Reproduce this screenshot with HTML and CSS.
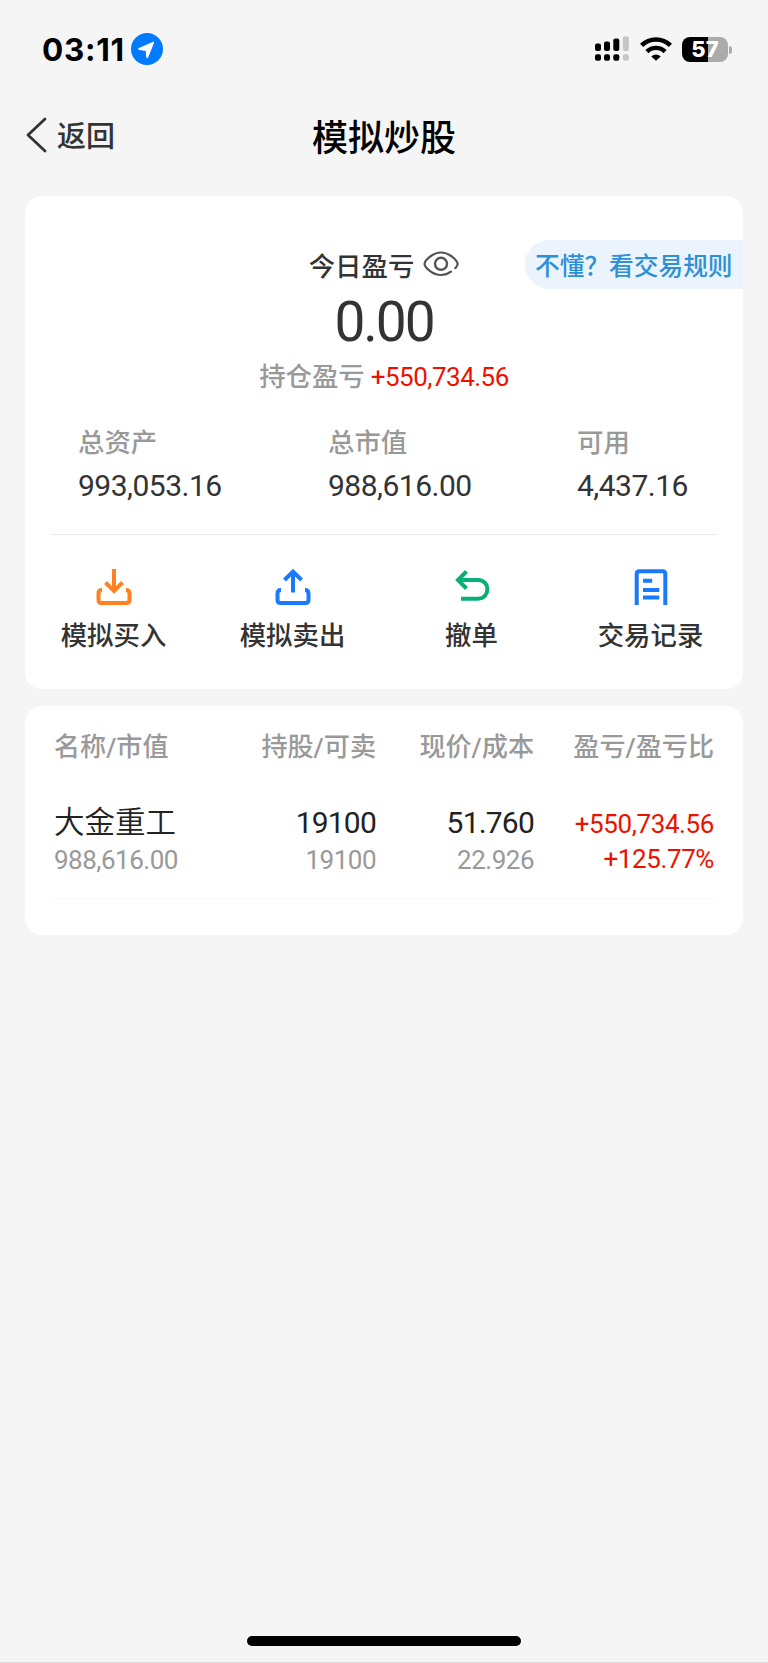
FILE: index.html
```
<!DOCTYPE html>
<html lang="zh-CN">

<head>
    <meta charset="UTF-8" />
    <meta name="viewport" content="width=device-width, initial-scale=1.0" />
    <title>模拟炒股</title>
    <link rel="stylesheet" href="styles.css">
</head>

<body>
    <div class="status-bar">
        <span class="time">03:11</span>
        <svg class="location" width="32" height="32" viewBox="0 0 32 32">
            <circle cx="16" cy="16" r="16" fill="#007aff" />
            <path d="M22 9.8 L8.3 16 L15.6 16.9 L16.2 24 Z" fill="#fff" stroke="#fff" stroke-width="2" stroke-linejoin="round" />
        </svg>
        <svg class="signal" width="34" height="26" viewBox="0 0 34 26">
            <rect x="0" y="7.5" width="6" height="7.5" rx="2" />
            <rect x="9" y="5.5" width="6" height="9.5" rx="2" />
            <rect x="18.3" y="2.5" width="6" height="12.5" rx="2" />
            <rect x="0" y="18.3" width="6" height="6.5" rx="2" />
            <rect x="9" y="18.3" width="6" height="6.5" rx="2" />
            <rect x="18.3" y="18.3" width="6" height="6.5" rx="2" />
            <rect x="27.8" y="0.3" width="6" height="14.7" rx="2" fill="#c6c6c6" />
            <rect x="27.8" y="18.3" width="6" height="6.5" rx="2" fill="#c6c6c6" />
        </svg>
        <svg class="wifi" width="32" height="24" viewBox="0 0 32 24">
            <path d="M1.6 8.4 A20.5 20.5 0 0 1 30.4 8.4" fill="none" stroke="#000" stroke-width="4.6" />
            <path d="M6.9 14.6 A12.9 12.9 0 0 1 25.1 14.6" fill="none" stroke="#000" stroke-width="4.4" />
            <path d="M16 23.8 L11.3 19.4 A7 7 0 0 1 20.7 19.4 Z" />
        </svg>
        <div class="battery">57</div>
    </div>

    <header class="nav-bar">
        <a class="back">
            <svg width="22" height="36" viewBox="0 0 22 36">
                <path d="M20 2 L3 18 L20 34" fill="none" stroke="#333" stroke-width="2.8" stroke-linecap="round" stroke-linejoin="round" />
            </svg>
            <span>返回</span>
        </a>
        <h1>模拟炒股</h1>
    </header>

    <section class="card summary">
        <a class="rules">不懂？看交易规则</a>
        <div class="today-label">
            <span>今日盈亏</span>
            <svg width="36" height="26" viewBox="0 0 36 26">
                <path d="M32.3 17.2 C34 15.3 34.6 14 34.6 13 C34.6 10 27 1.5 18 1.5 C9 1.5 1.6 10 1.6 13 C1.6 16 9 24 18 24 C22 24 25.5 22.5 28 20.7" fill="none" stroke="#555" stroke-width="2.2" stroke-linecap="round" />
                <circle cx="18" cy="12.8" r="6" fill="none" stroke="#555" stroke-width="2.4" />
            </svg>
        </div>
        <div class="today-value">0.00</div>
        <div class="position">
            <span class="position-label">持仓盈亏</span>
            <span class="position-value">+550,734.56</span>
        </div>

        <div class="assets">
            <div class="asset">
                <div class="asset-label">总资产</div>
                <div class="asset-value">993,053.16</div>
            </div>
            <div class="asset">
                <div class="asset-label">总市值</div>
                <div class="asset-value">988,616.00</div>
            </div>
            <div class="asset">
                <div class="asset-label">可用</div>
                <div class="asset-value">4,437.16</div>
            </div>
        </div>

        <div class="actions">
            <a class="action">
                <svg width="36" height="38" viewBox="0 0 36 38" fill="none" stroke="#ff8120" stroke-width="4">
                    <path d="M18 1 V24 M9.5 14.5 L18 23 L26.5 14.5" />
                    <path d="M6 22 Q2.5 22 2.5 25.5 V32 Q2.5 35 5.5 35 H30.5 Q33.5 35 33.5 32 V25.5 Q33.5 22 30 22" />
                </svg>
                <span>模拟买入</span>
            </a>
            <a class="action">
                <svg width="36" height="38" viewBox="0 0 36 38" fill="none" stroke="#1a7aff" stroke-width="4">
                    <path d="M18 24.5 V4 M9.5 12 L18 3.5 L26.5 12" />
                    <path d="M6 22 Q2.5 22 2.5 25.5 V32 Q2.5 35 5.5 35 H30.5 Q33.5 35 33.5 32 V25.5 Q33.5 22 30 22" />
                </svg>
                <span>模拟卖出</span>
            </a>
            <a class="action">
                <svg width="36" height="38" viewBox="0 0 36 38" fill="none" stroke="#06b077" stroke-width="4">
                    <path d="M12.5 3.5 L4 12 L12.5 20.5" />
                    <path d="M4 12 H24 C36.5 12 36.5 30.7 24 30.7 H7" />
                </svg>
                <span>撤单</span>
            </a>
            <a class="action">
                <svg width="36" height="38" viewBox="0 0 36 38" fill="none" stroke="#1a7aff" stroke-width="4">
                    <path d="M3.7 37 V6 Q3.7 3.3 6.4 3.3 H29.6 Q32.3 3.3 32.3 6 V37" />
                    <path d="M10 12.8 H19.2 M10 22 H26.3 M10 29.5 H26.3" />
                </svg>
                <span>交易记录</span>
            </a>
        </div>
    </section>

    <section class="card holdings">
        <div class="row head">
            <div>名称/市值</div>
            <div>持股/可卖</div>
            <div>现价/成本</div>
            <div>盈亏/盈亏比</div>
        </div>
        <div class="row stock">
            <div>
                <div class="name">大金重工</div>
                <div class="sub">988,616.00</div>
            </div>
            <div>
                <div class="num">19100</div>
                <div class="sub">19100</div>
            </div>
            <div>
                <div class="num">51.760</div>
                <div class="sub">22.926</div>
            </div>
            <div class="profit">
                <div>+550,734.56</div>
                <div>+125.77%</div>
            </div>
        </div>
    </section>

    <div class="home-indicator"></div>
</body>

</html>
```

FILE: styles.css
```
:root {
    --bg: #f5f5f5;
    --text: #333;
    --muted: #999;
    --red: #ee1100;
    --line: #ececec;
}

* {
    box-sizing: border-box;
}

body {
    margin: 0;
    min-height: 1663px;
    display: flex;
    flex-direction: column;
    background: var(--bg);
    border-bottom: 1px solid #ddd;
    color: var(--text);
    font-family: Roboto, "Noto Sans CJK SC", sans-serif;
    font-weight: 500;
}

svg {
    display: block;
    flex: none;
}

.status-bar {
    display: flex;
    align-items: center;
    height: 98px;
    padding: 0 36px 0 42px;
}

.time {
    width: 88px;
    font-family: Inter, sans-serif;
    font-size: 31.5px;
    font-weight: 700;
    letter-spacing: 0.7px;
    color: #000;
}

.location {
    margin-left: 1px;
}

.signal {
    margin-left: auto;
}

.wifi {
    margin: 0 10px 0 11px;
}

.battery {
    position: relative;
    width: 46px;
    height: 25px;
    margin-right: 4px;
    border-radius: 8px;
    background: linear-gradient(90deg, #000 26px, #ababab 26px);
    color: #fff;
    font: 800 22px/25px Inter, sans-serif;
    text-align: center;
}

.battery::after {
    content: "";
    position: absolute;
    right: -4px;
    top: 9px;
    width: 3px;
    height: 8px;
    border-radius: 0 4px 4px 0;
    background: #ababab;
}

.nav-bar {
    display: grid;
    grid-template-columns: 1fr auto 1fr;
    align-items: center;
    height: 76px;
    padding: 0 25px 3px;
}

.back {
    display: flex;
    align-items: center;
    gap: 10px;
    padding-top: 1px;
    font-size: 29px;
}

.back span {
    margin-top: -2px;
}

h1 {
    margin: 0;
    font-size: 36px;
    font-weight: 500;
    color: #000;
}

.card {
    margin: 0 25px;
    border-radius: 17px;
    background: #fff;
}

.summary {
    position: relative;
    height: 493px;
    margin-top: 22px;
    padding: 49px 25px 0;
}

.rules {
    position: absolute;
    top: 44px;
    right: 0;
    width: 218px;
    height: 49px;
    padding-left: 10px;
    border-radius: 25px 0 0 25px;
    background: #ebf3fc;
    color: #2c90d9;
    font-size: 24.7px;
    line-height: 53px;
    white-space: nowrap;
}

.today-label {
    display: flex;
    justify-content: center;
    align-items: center;
    gap: 9px;
    height: 38px;
    font-size: 26.4px;
}

.today-value {
    height: 75px;
    font-size: 55px;
    font-weight: 400;
    letter-spacing: -2px;
    line-height: 78px;
    text-align: center;
}

.position {
    display: flex;
    justify-content: center;
    gap: 6px;
    height: 38px;
    font-size: 26.4px;
    line-height: 39px;
}

.position-label {
    color: var(--muted);
}

.position-value {
    color: var(--red);
    font-size: 26px;
    font-weight: 400;
    letter-spacing: -0.5px;
}

.assets {
    display: grid;
    grid-template-columns: 250px 249px 1fr;
    height: 139px;
    padding: 28px 0 0 28px;
    border-bottom: 1px solid var(--line);
}

.asset-label {
    color: var(--muted);
    font-size: 26.4px;
    line-height: 38px;
}

.asset-value {
    font-size: 30px;
    font-weight: 400;
    letter-spacing: -0.5px;
    line-height: 48px;
}

.actions {
    display: grid;
    grid-template-columns: repeat(4, 179px);
    margin: 33px -26px 0;
}

.action {
    display: flex;
    flex-direction: column;
    align-items: center;
    gap: 11px;
    font-size: 26.4px;
    line-height: 38px;
}

.holdings {
    height: 229px;
    margin-top: 17px;
    padding: 22px 25px 0;
}

.row {
    display: grid;
    grid-template-columns: 160px 1fr 158px 180px;
    padding: 0 4px;
    text-align: right;
}

.row > :first-child {
    text-align: left;
}

.head {
    color: var(--muted);
    font-size: 26.1px;
    line-height: 38px;
}

.stock {
    height: 133px;
    padding-top: 36px;
    border-bottom: 1px solid #f9f9f9;
    font-weight: 400;
}

.name,
.num {
    color: #222;
    font-size: 30px;
    line-height: 42px;
    height: 42px;
}

.name {
    font-size: 30.5px;
    font-weight: 350;
    line-height: 41px;
}

.num {
    letter-spacing: -0.8px;
}

.sub {
    color: var(--muted);
    font-size: 26px;
    letter-spacing: -0.5px;
    line-height: 33px;
}

.profit {
    color: var(--red);
    font-size: 26px;
    letter-spacing: -0.4px;
    line-height: 35px;
    padding-top: 5px;
}

.home-indicator {
    width: 274px;
    height: 10px;
    margin: auto auto 16px;
    border-radius: 5px;
    background: #000;
}
```
